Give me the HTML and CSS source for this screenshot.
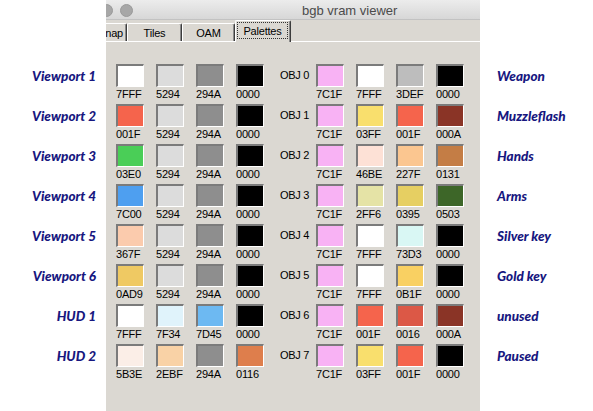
FILE: index.html
```html
<!DOCTYPE html>
<html>
<head>
<meta charset="utf-8">
<link rel="stylesheet" href="styles.css">
</head>
<body>
<div class="page">
  <div class="side side-left">
    <div class="tag">Viewport 1</div>
    <div class="tag">Viewport 2</div>
    <div class="tag">Viewport 3</div>
    <div class="tag">Viewport 4</div>
    <div class="tag">Viewport 5</div>
    <div class="tag">Viewport 6</div>
    <div class="tag">HUD 1</div>
    <div class="tag">HUD 2</div>
  </div>
  <div class="window">
    <div class="titlebar">
      <span class="light"></span>
      <span class="light"></span>
      <span class="title">bgb vram viewer</span>
    </div>
    <div class="tabs">
      <div class="tab tab-cut">nap</div>
      <div class="tab tab-tiles">Tiles</div>
      <div class="tab tab-oam">OAM</div>
      <div class="tab tab-active"><span class="focus">Palettes</span></div>
    </div>
    <div class="panel">
      <div class="prow">
        <div class="cell"><div class="sw c7fff"></div><div class="code">7FFF</div></div>
        <div class="cell"><div class="sw c5294"></div><div class="code">5294</div></div>
        <div class="cell"><div class="sw c294a"></div><div class="code">294A</div></div>
        <div class="cell"><div class="sw c0000"></div><div class="code">0000</div></div>
        <div class="obj">OBJ 0</div>
        <div class="cell"><div class="sw c7c1f"></div><div class="code">7C1F</div></div>
        <div class="cell"><div class="sw c7fff"></div><div class="code">7FFF</div></div>
        <div class="cell"><div class="sw c3def"></div><div class="code">3DEF</div></div>
        <div class="cell"><div class="sw c0000"></div><div class="code">0000</div></div>
      </div>
      <div class="prow">
        <div class="cell"><div class="sw c001f"></div><div class="code">001F</div></div>
        <div class="cell"><div class="sw c5294"></div><div class="code">5294</div></div>
        <div class="cell"><div class="sw c294a"></div><div class="code">294A</div></div>
        <div class="cell"><div class="sw c0000"></div><div class="code">0000</div></div>
        <div class="obj">OBJ 1</div>
        <div class="cell"><div class="sw c7c1f"></div><div class="code">7C1F</div></div>
        <div class="cell"><div class="sw c03ff"></div><div class="code">03FF</div></div>
        <div class="cell"><div class="sw c001f"></div><div class="code">001F</div></div>
        <div class="cell"><div class="sw c000a"></div><div class="code">000A</div></div>
      </div>
      <div class="prow">
        <div class="cell"><div class="sw c03e0"></div><div class="code">03E0</div></div>
        <div class="cell"><div class="sw c5294"></div><div class="code">5294</div></div>
        <div class="cell"><div class="sw c294a"></div><div class="code">294A</div></div>
        <div class="cell"><div class="sw c0000"></div><div class="code">0000</div></div>
        <div class="obj">OBJ 2</div>
        <div class="cell"><div class="sw c7c1f"></div><div class="code">7C1F</div></div>
        <div class="cell"><div class="sw c46be"></div><div class="code">46BE</div></div>
        <div class="cell"><div class="sw c227f"></div><div class="code">227F</div></div>
        <div class="cell"><div class="sw c0131"></div><div class="code">0131</div></div>
      </div>
      <div class="prow">
        <div class="cell"><div class="sw c7c00"></div><div class="code">7C00</div></div>
        <div class="cell"><div class="sw c5294"></div><div class="code">5294</div></div>
        <div class="cell"><div class="sw c294a"></div><div class="code">294A</div></div>
        <div class="cell"><div class="sw c0000"></div><div class="code">0000</div></div>
        <div class="obj">OBJ 3</div>
        <div class="cell"><div class="sw c7c1f"></div><div class="code">7C1F</div></div>
        <div class="cell"><div class="sw c2ff6"></div><div class="code">2FF6</div></div>
        <div class="cell"><div class="sw c0395"></div><div class="code">0395</div></div>
        <div class="cell"><div class="sw c0503"></div><div class="code">0503</div></div>
      </div>
      <div class="prow">
        <div class="cell"><div class="sw c367f"></div><div class="code">367F</div></div>
        <div class="cell"><div class="sw c5294"></div><div class="code">5294</div></div>
        <div class="cell"><div class="sw c294a"></div><div class="code">294A</div></div>
        <div class="cell"><div class="sw c0000"></div><div class="code">0000</div></div>
        <div class="obj">OBJ 4</div>
        <div class="cell"><div class="sw c7c1f"></div><div class="code">7C1F</div></div>
        <div class="cell"><div class="sw c7fff"></div><div class="code">7FFF</div></div>
        <div class="cell"><div class="sw c73d3"></div><div class="code">73D3</div></div>
        <div class="cell"><div class="sw c0000"></div><div class="code">0000</div></div>
      </div>
      <div class="prow">
        <div class="cell"><div class="sw c0ad9"></div><div class="code">0AD9</div></div>
        <div class="cell"><div class="sw c5294"></div><div class="code">5294</div></div>
        <div class="cell"><div class="sw c294a"></div><div class="code">294A</div></div>
        <div class="cell"><div class="sw c0000"></div><div class="code">0000</div></div>
        <div class="obj">OBJ 5</div>
        <div class="cell"><div class="sw c7c1f"></div><div class="code">7C1F</div></div>
        <div class="cell"><div class="sw c7fff"></div><div class="code">7FFF</div></div>
        <div class="cell"><div class="sw c0b1f"></div><div class="code">0B1F</div></div>
        <div class="cell"><div class="sw c0000"></div><div class="code">0000</div></div>
      </div>
      <div class="prow">
        <div class="cell"><div class="sw c7fff"></div><div class="code">7FFF</div></div>
        <div class="cell"><div class="sw c7f34"></div><div class="code">7F34</div></div>
        <div class="cell"><div class="sw c7d45"></div><div class="code">7D45</div></div>
        <div class="cell"><div class="sw c0000"></div><div class="code">0000</div></div>
        <div class="obj">OBJ 6</div>
        <div class="cell"><div class="sw c7c1f"></div><div class="code">7C1F</div></div>
        <div class="cell"><div class="sw c001f"></div><div class="code">001F</div></div>
        <div class="cell"><div class="sw c0016"></div><div class="code">0016</div></div>
        <div class="cell"><div class="sw c000a"></div><div class="code">000A</div></div>
      </div>
      <div class="prow">
        <div class="cell"><div class="sw c5b3e"></div><div class="code">5B3E</div></div>
        <div class="cell"><div class="sw c2ebf"></div><div class="code">2EBF</div></div>
        <div class="cell"><div class="sw c294a"></div><div class="code">294A</div></div>
        <div class="cell"><div class="sw c0116"></div><div class="code">0116</div></div>
        <div class="obj">OBJ 7</div>
        <div class="cell"><div class="sw c7c1f"></div><div class="code">7C1F</div></div>
        <div class="cell"><div class="sw c03ff"></div><div class="code">03FF</div></div>
        <div class="cell"><div class="sw c001f"></div><div class="code">001F</div></div>
        <div class="cell"><div class="sw c0000"></div><div class="code">0000</div></div>
      </div>
    </div>
  </div>
  <div class="side side-right">
    <div class="tag">Weapon</div>
    <div class="tag">Muzzleflash</div>
    <div class="tag">Hands</div>
    <div class="tag">Arms</div>
    <div class="tag">Silver key</div>
    <div class="tag">Gold key</div>
    <div class="tag">unused</div>
    <div class="tag">Paused</div>
  </div>
</div>
</body>
</html>
```

FILE: styles.css
```css
html, body {
  margin: 0;
  padding: 0;
  background: #ffffff;
}

.page {
  width: 593px;
  height: 411px;
  display: flex;
  overflow: hidden;
}

.side {
  display: flex;
  flex-direction: column;
  padding-top: 65px;
  box-sizing: border-box;
}

.side-left {
  width: 106px;
  padding-right: 10px;
  align-items: flex-end;
}

.side-right {
  flex: 1;
  padding-left: 17px;
  align-items: flex-start;
}

.tag {
  height: 40px;
  line-height: 23px;
  font-family: "Lato", "Open Sans", sans-serif;
  font-weight: 900;
  font-style: italic;
  font-size: 13.5px;
  color: #17177f;
  white-space: nowrap;
}

.window {
  width: 374px;
  display: flex;
  flex-direction: column;
  background: #dbd8d2;
  font-family: "Liberation Sans", Arial, sans-serif;
  font-size: 11px;
  color: #000;
  overflow: hidden;
}

.titlebar {
  height: 20px;
  box-sizing: border-box;
  display: flex;
  align-items: center;
  background: linear-gradient(#ececec, #d7d7d7);
  border-bottom: 1px solid #c2c2c2;
  overflow: hidden;
  padding-top: 1px;
}

.light {
  flex: none;
  width: 13px;
  height: 13px;
  box-sizing: border-box;
  border-radius: 50%;
  background: #a7a7a7;
  border: 1px solid #9a9a9a;
  margin-right: 7px;
}

.light:first-child {
  margin-left: -6px;
}

.title {
  margin-left: 162px;
  font-family: "Liberation Sans", Arial, sans-serif;
  font-size: 13px;
  color: #4b4b4b;
  white-space: nowrap;
}

.tabs {
  height: 21px;
  display: flex;
  align-items: flex-end;
  position: relative;
  z-index: 1;
}

.tab {
  height: 18px;
  box-sizing: border-box;
  display: flex;
  align-items: center;
  justify-content: center;
  border-top: 1px solid #ffffff;
  border-left: 1px solid #ffffff;
  border-right: 1px solid #3c3c3c;
  border-radius: 2px 2px 0 0;
  box-shadow: inset -1px 0 #8a8a8a;
  letter-spacing: -0.2px;
  white-space: nowrap;
  background: #dbd8d2;
}

.tab-cut {
  width: 21px;
  border-left: none;
  border-radius: 0 2px 0 0;
  justify-content: flex-end;
  padding-right: 3px;
}

.tab-tiles {
  width: 55px;
}

.tab-oam {
  width: 53px;
}

.tab-active {
  width: 56px;
  height: 22px;
  margin-bottom: -1px;
  padding: 1px 2px 3px 1px;
  align-items: stretch;
}

.focus {
  flex: 1;
  display: flex;
  align-items: center;
  justify-content: center;
  border: 1px dotted #333;
}

.panel {
  flex: 1;
  border-top: 1px solid #ffffff;
  padding-top: 22px;
  padding-left: 10px;
  display: flex;
  flex-direction: column;
}

.prow {
  height: 40px;
  display: flex;
}

.cell {
  width: 40px;
  display: flex;
  flex-direction: column;
}

.sw {
  width: 28px;
  height: 23px;
  box-sizing: border-box;
  border-style: solid;
  border-width: 2px 1px 1px 2px;
  border-color: #7b7b7b #ffffff #ffffff #7b7b7b;
}

.code {
  margin-top: 2px;
  line-height: 11px;
  letter-spacing: -0.2px;
}

.obj {
  width: 40px;
  box-sizing: border-box;
  padding-right: 7px;
  height: 23px;
  line-height: 23px;
  text-align: right;
  letter-spacing: -0.3px;
  white-space: nowrap;
}

.c7fff { background: #ffffff; }
.c5294 { background: #dcdcdc; }
.c294a { background: #8e8e8e; }
.c0000 { background: #000000; }
.c001f { background: #f5644c; }
.c03e0 { background: #4ace57; }
.c7c00 { background: #4e9ff0; }
.c367f { background: #fbcbad; }
.c0ad9 { background: #efc963; }
.c7f34 { background: #e0f3fb; }
.c7d45 { background: #6db9f2; }
.c5b3e { background: #fbeee7; }
.c2ebf { background: #f9d2a6; }
.c0116 { background: #de7e4c; }
.c7c1f { background: #f8b2f4; }
.c3def { background: #bdbdbd; }
.c03ff { background: #f9df6d; }
.c000a { background: #8a3426; }
.c46be { background: #fde1d6; }
.c227f { background: #fbc690; }
.c0131 { background: #c47d45; }
.c2ff6 { background: #e5e3a6; }
.c0395 { background: #e6cf62; }
.c0503 { background: #3d6628; }
.c73d3 { background: #d9f7f4; }
.c0b1f { background: #f9d062; }
.c0016 { background: #dc5846; }
```
